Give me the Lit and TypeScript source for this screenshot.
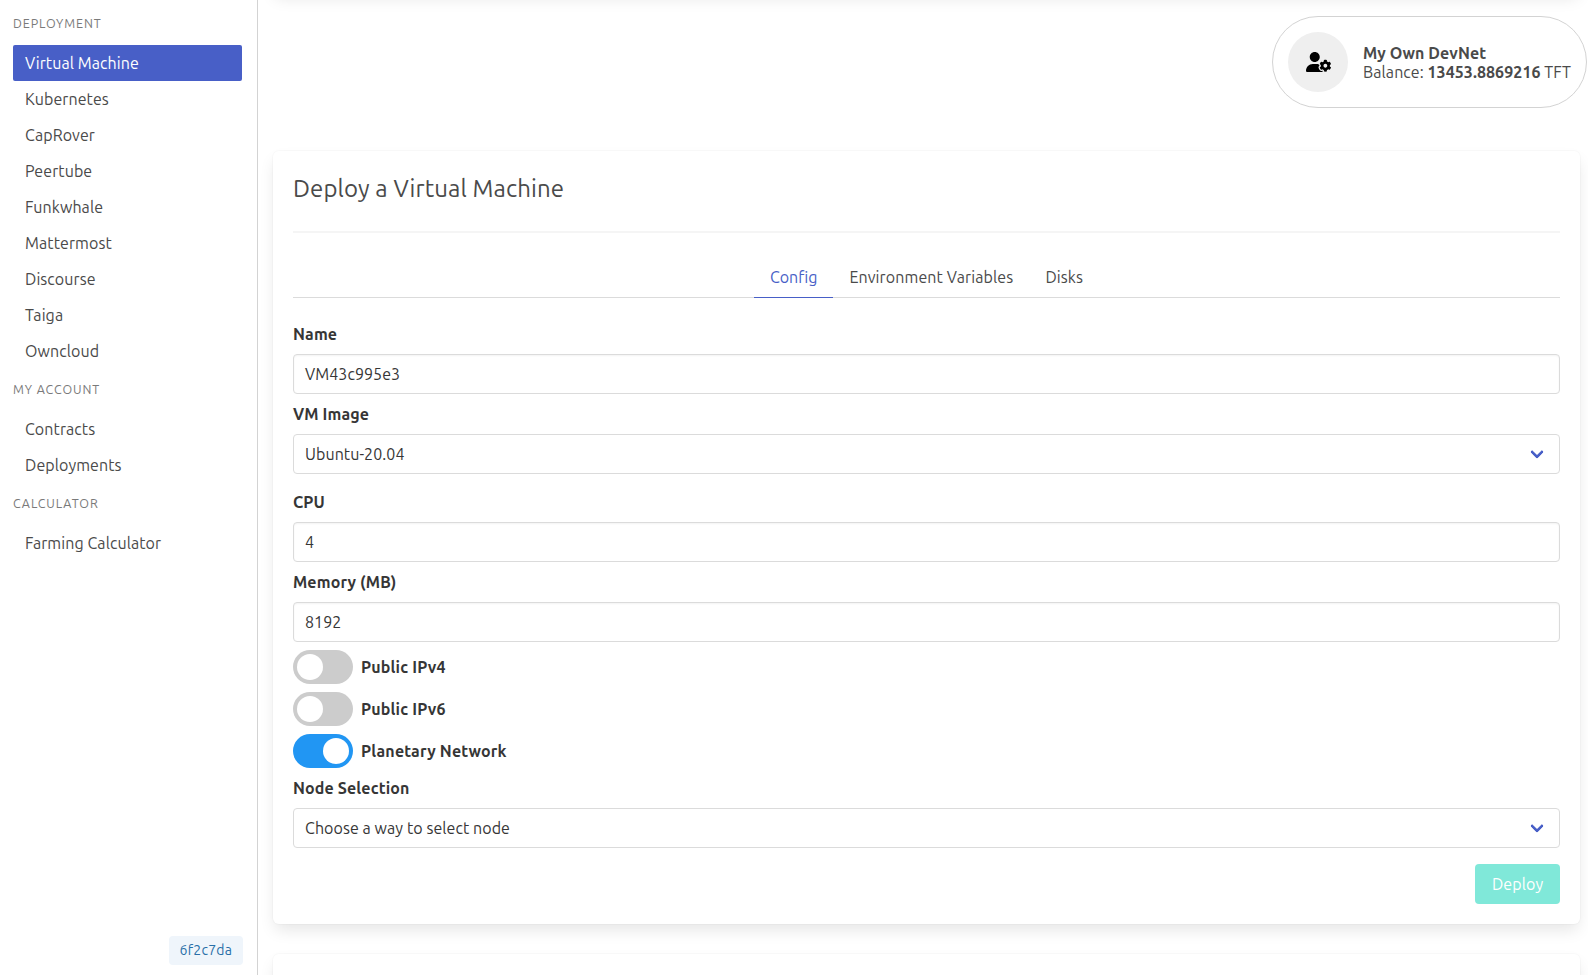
import { LitElement, html, css, svg } from "lit";
import { customElement, property } from "lit/decorators.js";
import { classMap } from "lit/directives/class-map.js";

const MENU = [
  {
    label: "Deployment",
    items: ["Virtual Machine", "Kubernetes", "CapRover", "Peertube", "Funkwhale", "Mattermost", "Discourse", "Taiga", "Owncloud"],
  },
  { label: "My Account", items: ["Contracts", "Deployments"] },
  { label: "Calculator", items: ["Farming Calculator"] },
];

const TABS = ["Config", "Environment Variables", "Disks"];

@customElement("side-menu")
class SideMenu extends LitElement {
  static styles = css`
    :host {
      display: flex;
      flex-direction: column;
      justify-content: space-between;
      box-sizing: border-box;
      width: 258px;
      height: 100%;
      padding: 15px 15px 10px 13px;
      border-right: 1px solid #d3d3d3;
    }
    .label {
      margin: 0 0 14px;
      font-size: 12.5px;
      line-height: 16px;
      letter-spacing: 0.9px;
      text-transform: uppercase;
      color: #7a7a7a;
    }
    ul {
      list-style: none;
      margin: 0 0 12px;
      padding: 0;
    }
    li {
      padding: 8px 12px;
      line-height: 20px;
      border-radius: 2px;
      letter-spacing: 0.08px;
      color: #4a4a4a;
    }
    .active {
      background: #485fc7;
      color: #fff;
    }
    .version {
      align-self: flex-end;
      margin-right: -1px;
      padding: 0 10.8px 1px;
      border-radius: 4px;
      background: #eff5fb;
      color: #296fa8;
      font-size: 14px;
      line-height: 28px;
      letter-spacing: 0.25px;
    }
  `;

  render() {
    return html`
      <nav>
        ${MENU.map(
          (group) => html`
            <p class="label">${group.label}</p>
            <ul>
              ${group.items.map(
                (item) => html`<li class=${classMap({ active: item === "Virtual Machine" })}>${item}</li>`
              )}
            </ul>
          `
        )}
      </nav>
      <span class="version">6f2c7da</span>
    `;
  }
}

@customElement("profile-pill")
class ProfilePill extends LitElement {
  static styles = css`
    :host {
      display: flex;
      align-items: center;
      gap: 15px;
      box-sizing: border-box;
      height: 92px;
      padding: 15px;
      border: 1px solid #d3d3d3;
      border-radius: 46px;
      line-height: 19px;
      letter-spacing: 0.07px;
      white-space: nowrap;
    }
    .avatar {
      display: flex;
      align-items: center;
      justify-content: center;
      width: 60px;
      height: 60px;
      border-radius: 50%;
      background: #efefef;
    }
    svg {
      display: block;
      width: 25px;
      height: 20px;
    }
    .text {
      padding-top: 2px;
    }
    p {
      margin: 0;
    }
    b {
      font-weight: 700;
    }
  `;

  render() {
    return html`
      <span class="avatar">
        <svg viewBox="0 0 640 512">
          ${svg`<path d="M425.1 482.6c-2.303-1.25-4.572-2.559-6.809-3.93l-7.818 4.493c-6.002 3.504-12.83 5.352-19.75 5.352c-10.71 0-21.13-4.492-28.97-12.75c-18.41-20.09-32.29-44.15-40.22-69.9c-5.352-18.06 2.343-36.87 17.83-45.24l8.018-4.669c-.0664-2.621-.0664-5.242 0-7.859l-7.655-4.461c-12.3-6.953-19.4-19.66-19.64-33.38C305.6 306.3 290.4 304 274.7 304H173.3C77.61 304 0 381.7 0 477.4C0 496.5 15.52 512 34.66 512H413.3c5.727 0 10.9-1.727 15.66-4.188c-2.271-4.984-3.86-10.3-3.86-16.06V482.6zM224 256c70.7 0 128-57.31 128-128S294.7 0 224 0C153.3 0 96 57.31 96 128S153.3 256 224 256zM610.5 373.3c2.625-14 2.625-28.5 0-42.5l25.75-15c3-1.625 4.375-5.125 3.375-8.5c-6.75-21.5-18.25-41.13-33.25-57.38c-2.25-2.5-6-3.125-9-1.375l-25.75 14.88c-10.88-9.25-23.38-16.5-36.88-21.25V212.3c0-3.375-2.5-6.375-5.75-7c-22.25-5-45-4.875-66.25 0c-3.25 .625-5.625 3.625-5.625 7v29.88c-13.5 4.75-26 12-36.88 21.25L394.4 248.5c-2.875-1.75-6.625-1.125-9 1.375c-15 16.25-26.5 35.88-33.13 57.38c-1 3.375 .3751 6.875 3.25 8.5l25.75 15c-2.5 14-2.5 28.5 0 42.5l-25.75 15c-3 1.625-4.25 5.125-3.25 8.5c6.625 21.5 18.13 41 33.13 57.38c2.375 2.5 6 3.125 9 1.375l25.88-14.88c10.88 9.25 23.38 16.5 36.88 21.25v29.88c0 3.375 2.375 6.375 5.625 7c22.38 5 45 4.875 66.25 0c3.25-.625 5.75-3.625 5.75-7v-29.88c13.5-4.75 26-12 36.88-21.25l25.75 14.88c2.875 1.75 6.75 1.125 9-1.375c15-16.25 26.5-35.88 33.25-57.38c1-3.375-.3751-6.875-3.375-8.5L610.5 373.3zM496 400.5c-26.75 0-48.5-21.75-48.5-48.5s21.75-48.5 48.5-48.5c26.75 0 48.5 21.75 48.5 48.5S522.8 400.5 496 400.5z" fill="#000"/>`}
        </svg>
      </span>
      <div class="text">
        <p><b>My Own DevNet</b></p>
        <p>Balance: <b>13453.8869216</b> TFT</p>
      </div>
    `;
  }
}

@customElement("form-field")
class FormField extends LitElement {
  @property() label = "";
  @property() value = "";
  @property({ type: Boolean }) dropdown = false;

  static styles = css`
    :host {
      display: block;
    }
    .label {
      margin-bottom: 8px;
      font-weight: 700;
      line-height: 24px;
      letter-spacing: 0.13px;
      color: #363636;
    }
    .control {
      display: flex;
      align-items: center;
      justify-content: space-between;
      box-sizing: border-box;
      height: 40px;
      padding: 0 17px 0 11px;
      border: 1px solid #dbdbdb;
      border-radius: 4px;
      box-shadow: inset 0 1px 2px rgba(10, 10, 10, 0.05);
      line-height: 24px;
      letter-spacing: 0.07px;
      color: #363636;
    }
    .select {
      box-shadow: none;
    }
    .arrow {
      box-sizing: border-box;
      width: 10px;
      height: 10px;
      margin-bottom: 4px;
      border: 3px solid #485fc7;
      border-top: 0;
      border-right: 0;
      border-radius: 2px;
      transform: rotate(-45deg);
    }
  `;

  render() {
    return html`
      <div class="label">${this.label}</div>
      <div class=${classMap({ control: true, select: this.dropdown })}>
        <span>${this.value}</span>
        ${this.dropdown ? html`<span class="arrow"></span>` : ""}
      </div>
    `;
  }
}

@customElement("toggle-field")
class ToggleField extends LitElement {
  @property() label = "";
  @property({ type: Boolean }) on = false;

  static styles = css`
    :host {
      display: flex;
      align-items: center;
      gap: 8px;
      font-weight: 700;
      line-height: 24px;
      letter-spacing: 0.17px;
      color: #363636;
    }
    .track {
      display: flex;
      box-sizing: border-box;
      width: 60px;
      height: 34px;
      padding: 4px;
      border-radius: 17px;
      background: #ccc;
    }
    .on {
      justify-content: flex-end;
      background: #2196f3;
    }
    .knob {
      width: 26px;
      height: 26px;
      border-radius: 50%;
      background: #fff;
    }
  `;

  render() {
    return html`
      <span class=${classMap({ track: true, on: this.on })}><span class="knob"></span></span>
      <span>${this.label}</span>
    `;
  }
}

@customElement("app-root")
class AppRoot extends LitElement {
  static styles = css`
    :host {
      display: grid;
      grid-template-columns: 258px 1fr;
      height: 975px;
      overflow: hidden;
      background: #fff;
      color: #4a4a4a;
      font: 400 16px/24px Ubuntu, "Open Sans", "Noto Sans", sans-serif;
    }
    main {
      display: flex;
      flex-direction: column;
      min-width: 0;
      height: 975px;
      overflow: hidden;
    }
    .card {
      flex: none;
      box-sizing: border-box;
      margin: 0 8px 0 15px;
      padding: 20px;
      border-radius: 6px;
      background: #fff;
      box-shadow: 0 8px 16px -2px rgba(10, 10, 10, 0.1), 0 0 0 1px rgba(10, 10, 10, 0.02);
    }
    .previous {
      height: 60px;
      margin-top: -68px;
    }
    .next {
      height: 60px;
      margin-top: 30px;
    }
    .top {
      display: flex;
      justify-content: flex-end;
      margin: 24px 1px 43px 0;
    }
    h4 {
      margin: 0;
      padding: 4px 0 28px;
      border-bottom: 2px solid #f5f5f5;
      font-size: 24px;
      font-weight: 400;
      line-height: 28px;
      letter-spacing: 0.11px;
    }
    .tabs {
      display: flex;
      justify-content: center;
      margin: 24px 0;
      box-shadow: inset 0 -1px #dbdbdb;
    }
    .tab {
      padding: 8px 16px;
      border-bottom: 1px solid #dbdbdb;
      letter-spacing: 0.11px;
    }
    .current {
      border-color: #485fc7;
      letter-spacing: 0;
      color: #485fc7;
    }
    .fields {
      display: flex;
      flex-direction: column;
      gap: 8px;
    }
    .spaced {
      margin-top: 8px;
    }
    .actions {
      display: flex;
      justify-content: flex-end;
      margin-top: 16px;
    }
    .deploy {
      padding: 8px 16.8px;
      border-radius: 4px;
      background: #80e8d9;
      letter-spacing: 0.1px;
      color: #fff;
    }
  `;

  render() {
    return html`
      <side-menu></side-menu>
      <main>
        <section class="card previous"></section>
        <div class="top"><profile-pill></profile-pill></div>
        <section class="card">
          <h4>Deploy a Virtual Machine</h4>
          <div class="tabs">
            ${TABS.map((t) => html`<span class=${classMap({ tab: true, current: t === "Config" })}>${t}</span>`)}
          </div>
          <div class="fields">
            <form-field label="Name" value="VM43c995e3"></form-field>
            <form-field label="VM Image" value="Ubuntu-20.04" dropdown></form-field>
            <form-field class="spaced" label="CPU" value="4"></form-field>
            <form-field label="Memory (MB)" value="8192"></form-field>
            <toggle-field label="Public IPv4"></toggle-field>
            <toggle-field label="Public IPv6"></toggle-field>
            <toggle-field label="Planetary Network" on></toggle-field>
            <form-field label="Node Selection" value="Choose a way to select node" dropdown></form-field>
          </div>
          <div class="actions"><span class="deploy">Deploy</span></div>
        </section>
        <section class="card next"></section>
      </main>
    `;
  }
}
